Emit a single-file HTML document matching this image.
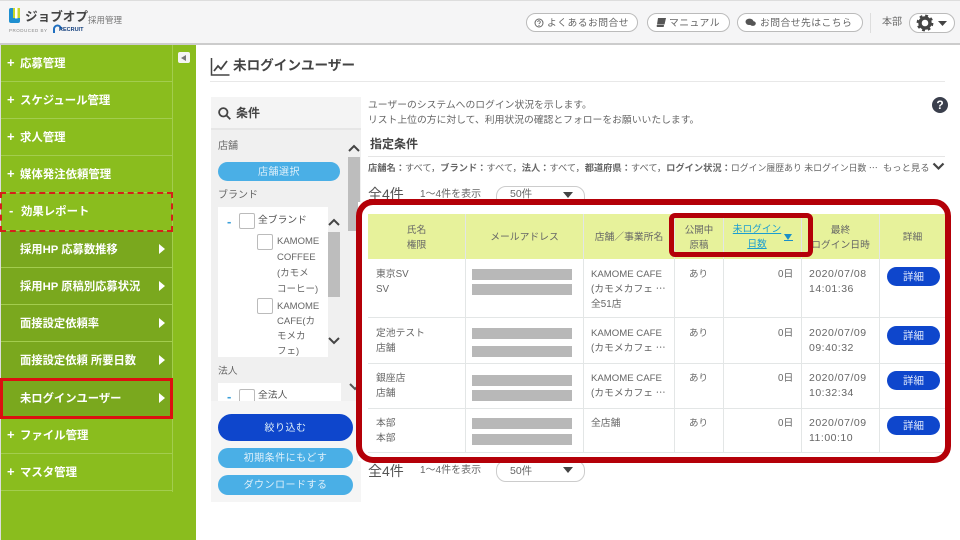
<!DOCTYPE html>
<html lang="ja"><head><meta charset="utf-8">
<style>
html,body{margin:0;padding:0}
body{width:960px;height:540px;position:relative;overflow:hidden;background:#fff;font-family:"Liberation Sans","Noto Sans CJK JP",sans-serif;color:#666}
div,span{position:absolute;white-space:nowrap;box-sizing:border-box}
svg{position:absolute}
.m{left:1px;width:171px;height:37px;border-bottom:1px solid #a3cd4e;color:#fff;font-size:11.400px;font-weight:bold;line-height:38px;padding-left:6px}
.p{display:inline-block;width:13px;font-style:normal;font-size:13px;line-height:0}
.s{background:#7aa81e;padding-left:19px;font-size:11.300px;line-height:38px}
.tri{position:absolute;left:158px;top:13px;width:0;height:0;border-left:6px solid #fff;border-top:5px solid transparent;border-bottom:5px solid transparent}
.hb{height:19px;top:13px;border:1px solid #bbb;border-radius:10px;background:#fff}
.ht{top:16px;font-size:9.800px;line-height:15px;color:#666;letter-spacing:.45px}
.th{background:#e7f29b;top:214px;height:45px;padding-top:2px;font-size:9.800px;line-height:15px;text-align:center;display:flex;align-items:center;justify-content:center;white-space:normal}
.vl{top:214px;width:1px;height:239px;background:#e3e6e6}
.hl{left:368px;width:577px;height:1px;background:#e3e6e6}
.t{font-size:9.800px;line-height:15px;color:#666}
.k{font-size:9.600px}
.d{font-size:10.500px;letter-spacing:.5px}
.g{left:472px;width:100px;height:11px;background:#b8b8b8}
.b{left:887px;width:53px;height:19px;background:#0e46cc;color:#dfe8fb;border-radius:10px;font-size:10.500px;line-height:21px;text-align:center}
.pill{left:218px;width:135px;border-radius:10px;color:#dff0fa;text-align:center;font-size:10px;letter-spacing:.5px}
.cb{width:16px;height:16px;background:#fff;border:1px solid #bbb;border-radius:2px}
</style></head><body>

<div style="left:0;top:0;width:960px;height:45px;background:#f5f5f6;border-top:1px solid #ddd;border-bottom:2px solid #ccc"></div>
<svg style="left:9px;top:8px" width="11" height="15"><rect width="11" height="15" rx="2" fill="#1f8fd0"/><rect x="4" y="0" width="7" height="10" fill="#c8d62b"/><rect x="6" y="0" width="2.500" height="10.500" fill="#fff"/></svg>
<div style="left:25px;top:8px;font-size:12.600px;font-weight:bold;color:#444;line-height:18px">ジョブオプ</div>
<div style="left:88px;top:14px;font-size:8.500px;color:#777;line-height:12px">採用管理</div>
<div style="left:9px;top:27px;font-size:4.500px;color:#888;line-height:7px;letter-spacing:.5px">PRODUCED BY</div>
<svg style="left:52px;top:24px" width="10" height="10" viewBox="0 0 10 10" fill="none" stroke="#1f6fc0" stroke-width="2"><path d="M2 9V5a3.500 3.500 0 0 1 7 0"/></svg>
<div style="left:59px;top:26px;font-size:5.500px;font-weight:bold;color:#123e7c;line-height:8px">RECRUIT</div>

<div class="hb" style="left:526px;width:112px"></div>
<div class="hb" style="left:647px;width:83px"></div>
<div class="hb" style="left:737px;width:126px"></div>
<svg style="left:534px;top:18px" width="10" height="10" viewBox="0 0 10 10"><circle cx="5" cy="5" r="4" fill="none" stroke="#666"/><path d="M3.700 4a1.300 1.300 0 1 1 2 1.100c-.5.3-.7.500-.7 1" fill="none" stroke="#666" stroke-width=".9"/><rect x="4.500" y="7" width="1" height="1" fill="#666"/></svg>
<svg style="left:656px;top:18px" width="10" height="9" viewBox="0 0 10 9"><path d="M2 0h8L8.500 6.500H1L2 0zM1 7h7L7.700 9H1.300C.5 9 .5 7 1 7z" fill="#555"/></svg>
<svg style="left:745px;top:18px" width="11" height="9" viewBox="0 0 11 9"><ellipse cx="4.500" cy="3.800" rx="4" ry="3.200" fill="#555"/><ellipse cx="7.800" cy="5.500" rx="3" ry="2.400" fill="#555"/></svg>
<div class="ht" style="left:547px">よくあるお問合せ</div>
<div class="ht" style="left:669px">マニュアル</div>
<div class="ht" style="left:760px">お問合せ先はこちら</div>
<div style="left:870px;top:13px;width:1px;height:20px;background:#ddd"></div>
<div style="left:882px;top:16px;font-size:10px;line-height:14px;color:#666">本部</div>
<div class="hb" style="left:909px;width:46px;height:20px"></div>
<svg style="left:916px;top:14px" width="36" height="18" viewBox="0 0 36 18"><circle cx="9" cy="9" r="5" fill="none" stroke="#444" stroke-width="3.400"/><circle cx="9" cy="9" r="7.200" fill="none" stroke="#444" stroke-width="2.400" stroke-dasharray="2.800 2.850"/><path d="M22 7h9l-4.500 5z" fill="#444"/></svg>

<div style="left:0;top:45px;width:1px;height:495px;background:#ddd"></div>
<div style="left:1px;top:45px;width:195px;height:495px;background:#8abd1e"></div>
<div style="left:172px;top:45px;width:1px;height:447px;background:#a3cd4e"></div>
<div style="left:178px;top:52px;width:12px;height:11px;background:#f4f4f4;border-radius:2px"></div>
<div style="left:181px;top:55px;width:0;height:0;border-right:5px solid #777;border-top:3px solid transparent;border-bottom:3px solid transparent"></div>

<div class="m" style="top:45px"><i class="p">+</i>応募管理</div>
<div class="m" style="top:82px"><i class="p">+</i>スケジュール管理</div>
<div class="m" style="top:119px"><i class="p">+</i>求人管理</div>
<div class="m" style="top:156px"><i class="p">+</i>媒体発注依頼管理</div>
<div class="m" style="top:193px;height:38px;line-height:39px;padding-left:8px"><i class="p" style="width:12px">-</i>効果レポート</div>
<div class="m s" style="top:231px">採用HP 応募数推移<i class="tri"></i></div>
<div class="m s" style="top:268px">採用HP 原稿別応募状況<i class="tri"></i></div>
<div class="m s" style="top:305px">面接設定依頼率<i class="tri"></i></div>
<div class="m s" style="top:342px">面接設定依頼 所要日数<i class="tri"></i></div>
<div class="m s" style="top:379px;height:38px;line-height:40px">未ログインユーザー<i class="tri" style="top:14px"></i></div>
<div class="m" style="top:417px"><i class="p">+</i>ファイル管理</div>
<div class="m" style="top:454px"><i class="p">+</i>マスタ管理</div>
<div style="left:0;top:192px;width:173px;height:40px;border:2px dashed #d5201a"></div>
<div style="left:0;top:378px;width:173px;height:41px;border:3px solid #dc1010"></div>

<svg style="left:210px;top:57px" width="21" height="20" viewBox="0 0 21 20" fill="none" stroke="#444" stroke-width="1.500"><path d="M1.500 1v17h18"/><path d="M4 14l4-5 3 3 6-8" stroke-width="1.800"/></svg>
<div style="left:233px;top:57px;font-size:13.600px;font-weight:bold;color:#444;line-height:18px">未ログインユーザー</div>
<div style="left:210px;top:81px;width:735px;height:1px;background:#e8e8e8"></div>

<div style="left:211px;top:97px;width:150px;height:405px;background:#f0f0f0"></div>
<div style="left:211px;top:97px;width:150px;height:33px;background:#f4f4f4;border-bottom:2px solid #e6e6e6"></div>
<svg style="left:218px;top:107px" width="13" height="13" viewBox="0 0 13 13" fill="none" stroke="#444" stroke-width="1.800"><circle cx="5.300" cy="5.300" r="4.200"/><path d="M8.300 8.300l4 4"/></svg>
<div style="left:236px;top:105px;font-size:12px;font-weight:bold;color:#444;line-height:16px">条件</div>
<div style="left:218px;top:140px;font-size:10px;line-height:14px">店舗</div>
<svg style="left:348px;top:144px" width="12" height="9" viewBox="0 0 12 9" fill="none" stroke="#444" stroke-width="2"><path d="M1 7l5-5 5 5"/></svg>
<div style="left:348px;top:157px;width:12px;height:74px;background:#bdbdbd"></div>
<div class="pill" style="left:218px;top:162px;width:122px;height:19px;line-height:21px;background:#4aafe6">店舗選択</div>
<div style="left:218px;top:189px;font-size:10px;line-height:14px">ブランド</div>
<div style="left:218px;top:207px;width:110px;height:150px;background:#fff"></div>
<div style="left:227px;top:214px;font-size:13px;font-weight:bold;color:#3a9fd8;line-height:16px">-</div>
<div class="cb" style="left:239px;top:213px"></div>
<div class="t" style="left:258px;top:213px;color:#555">全ブランド</div>
<div class="cb" style="left:257px;top:234px"></div>
<div class="t" style="left:277px;top:234px;line-height:16px;font-size:9.500px">KAMOME<br>COFFEE<br>(カモメ<br>コーヒー)</div>
<div class="cb" style="left:257px;top:298px"></div>
<div class="t" style="left:277px;top:299px;line-height:15px;font-size:9.500px">KAMOME<br>CAFE(カ<br>モメカ<br>フェ)</div>
<svg style="left:328px;top:218px" width="12" height="9" viewBox="0 0 12 9" fill="none" stroke="#444" stroke-width="2"><path d="M1 7l5-5 5 5"/></svg>
<div style="left:328px;top:232px;width:12px;height:65px;background:#bdbdbd"></div>
<svg style="left:328px;top:336px" width="12" height="9" viewBox="0 0 12 9" fill="none" stroke="#444" stroke-width="2"><path d="M1 2l5 5 5-5"/></svg>
<div style="left:218px;top:365px;font-size:9.800px;line-height:14px">法人</div>
<div style="left:218px;top:383px;width:123px;height:18px;background:#fff"></div>
<div style="left:227px;top:389px;font-size:13px;font-weight:bold;color:#3a9fd8;line-height:16px">-</div>
<div class="cb" style="left:239px;top:389px;height:12px;border-bottom:0;border-radius:2px 2px 0 0"></div>
<div class="t" style="left:258px;top:390px;color:#555;line-height:11px;height:11px;overflow:hidden">全法人</div>
<svg style="left:349px;top:382px" width="12" height="9" viewBox="0 0 12 9" fill="none" stroke="#555" stroke-width="2"><path d="M1 2l5 5 5-5"/></svg>
<div style="left:211px;top:401px;width:150px;height:101px;background:#f5f5f5"></div>
<div class="pill" style="top:414px;height:27px;line-height:29px;background:#0e46cc;border-radius:14px">絞り込む</div>
<div class="pill" style="top:448px;height:20px;line-height:22px;background:#4aafe6">初期条件にもどす</div>
<div class="pill" style="top:475px;height:20px;line-height:22px;background:#4aafe6">ダウンロードする</div>

<div style="left:368px;top:98px;font-size:9.800px;line-height:15px;color:#666">ユーザーのシステムへのログイン状況を示します。<br>リスト上位の方に対して、利用状況の確認とフォローをお願いいたします。</div>
<div style="left:932px;top:97px;width:16px;height:16px;border-radius:50%;background:#3a3f4c;color:#fff;font-size:12px;font-weight:bold;line-height:16px;text-align:center">?</div>
<div style="left:370px;top:136px;font-size:12px;font-weight:bold;color:#444;line-height:16px">指定条件</div>
<div style="left:368px;top:156px;width:577px;height:1px;background:#e5e5e5"></div>
<div style="left:368px;top:161px;font-size:9.240px;line-height:14px;color:#666"><b>店舗名：</b>すべて，<b>ブランド：</b>すべて，<b>法人：</b>すべて，<b>都道府県：</b>すべて，<b>ログイン状況：</b><i style="font-style:normal;font-size:8.900px">ログイン履歴あり 未ログイン日数 ⋯</i></div>
<div style="left:883px;top:161px;font-size:9.300px;line-height:14px">もっと見る</div>
<svg style="left:932px;top:162px" width="13" height="9" viewBox="0 0 13 9" fill="none" stroke="#444" stroke-width="2.200"><path d="M1.500 1.500l5 5 5-5"/></svg>

<div style="left:368px;top:185px;font-size:14px;line-height:18px;color:#555">全4件</div>
<div style="left:420px;top:188px;font-size:10px;line-height:14px">1～4件を表示</div>
<div style="left:496px;top:186px;width:89px;height:22px;border:1px solid #ccc;border-radius:10px"></div>
<div style="left:510px;top:187px;font-size:10.500px;line-height:14px">50件</div>
<div style="left:563px;top:192px;width:0;height:0;border-top:6px solid #444;border-left:5px solid transparent;border-right:5px solid transparent"></div>

<div style="left:368px;top:462px;font-size:14px;line-height:18px;color:#555">全4件</div>
<div style="left:420px;top:464px;font-size:10px;line-height:14px">1～4件を表示</div>
<div style="left:496px;top:460px;width:89px;height:22px;border:1px solid #ccc;border-radius:10px"></div>
<div style="left:510px;top:464px;font-size:10.500px;line-height:14px">50件</div>
<div style="left:563px;top:467px;width:0;height:0;border-top:6px solid #444;border-left:5px solid transparent;border-right:5px solid transparent"></div>

<div style="left:358px;top:202px;width:591px;height:259px;background:#fff"></div>
<div class="th" style="left:368px;width:97px">氏名<br>権限</div>
<div class="th" style="left:466px;width:117px">メールアドレス</div>
<div class="th" style="left:584px;width:90px">店舗／事業所名</div>
<div class="th" style="left:675px;width:48px;font-size:9.500px">公開中<br>原稿</div>
<div class="th" style="left:724px;width:77px"></div>
<div class="th" style="left:802px;width:77px">最終<br>ログイン日時</div>
<div class="th" style="left:880px;width:65px">詳細</div>
<div style="left:724px;top:222px;width:66px;font-size:9.700px;line-height:15px;color:#1b9ed0;text-align:center;text-decoration:underline">未ログイン<br>日数</div>
<div style="left:784px;top:234px;width:0;height:0;border-top:6px solid #1b8fc8;border-left:4.500px solid transparent;border-right:4.500px solid transparent"></div>
<div style="left:784px;top:240px;width:9px;height:1px;background:#1b8fc8"></div>

<div class="vl" style="left:465px"></div><div class="vl" style="left:583px"></div><div class="vl" style="left:674px"></div><div class="vl" style="left:723px"></div><div class="vl" style="left:801px"></div><div class="vl" style="left:879px"></div>
<div class="hl" style="top:317px"></div><div class="hl" style="top:363px"></div><div class="hl" style="top:408px"></div><div class="hl" style="top:452px"></div>

<div class="t" style="left:376px;top:267px">東京SV<br>SV</div>
<div class="t" style="left:376px;top:326px">定池テスト<br>店舗</div>
<div class="t" style="left:376px;top:371px">銀座店<br>店舗</div>
<div class="t" style="left:376px;top:416px">本部<br>本部</div>

<div class="g" style="top:269px"></div><div class="g" style="top:284px"></div>
<div class="g" style="top:328px"></div><div class="g" style="top:346px"></div>
<div class="g" style="top:375px"></div><div class="g" style="top:390px"></div>
<div class="g" style="top:418px"></div><div class="g" style="top:434px"></div>

<div class="t" style="left:591px;top:267px"><span class="k" style="position:static">KAMOME CAFE</span><br>(カモメカフェ ⋯<br>全51店</div>
<div class="t" style="left:591px;top:326px"><span class="k" style="position:static">KAMOME CAFE</span><br>(カモメカフェ ⋯</div>
<div class="t" style="left:591px;top:371px"><span class="k" style="position:static">KAMOME CAFE</span><br>(カモメカフェ ⋯</div>
<div class="t" style="left:591px;top:416px">全店舗</div>

<div class="t" style="left:689px;top:267px;font-size:9.500px">あり</div><div class="t" style="left:689px;top:326px;font-size:9.500px">あり</div><div class="t" style="left:689px;top:371px;font-size:9.500px">あり</div><div class="t" style="left:689px;top:416px;font-size:9.500px">あり</div>
<div class="t" style="left:778px;top:267px">0日</div><div class="t" style="left:778px;top:326px">0日</div><div class="t" style="left:778px;top:371px">0日</div><div class="t" style="left:778px;top:416px">0日</div>

<div class="t d" style="left:809px;top:267px">2020/07/08<br>14:01:36</div>
<div class="t d" style="left:809px;top:326px">2020/07/09<br>09:40:32</div>
<div class="t d" style="left:809px;top:371px">2020/07/09<br>10:32:34</div>
<div class="t d" style="left:809px;top:416px">2020/07/09<br>11:00:10</div>

<div class="b" style="top:267px">詳細</div><div class="b" style="top:326px">詳細</div><div class="b" style="top:371px">詳細</div><div class="b" style="top:416px">詳細</div>

<div style="left:356px;top:199px;width:595px;height:264px;border:6px solid #b40008;border-radius:17px"></div>
<div style="left:669px;top:213px;width:144px;height:44px;border:5px solid #b40008;border-radius:6px"></div>
</body></html>
